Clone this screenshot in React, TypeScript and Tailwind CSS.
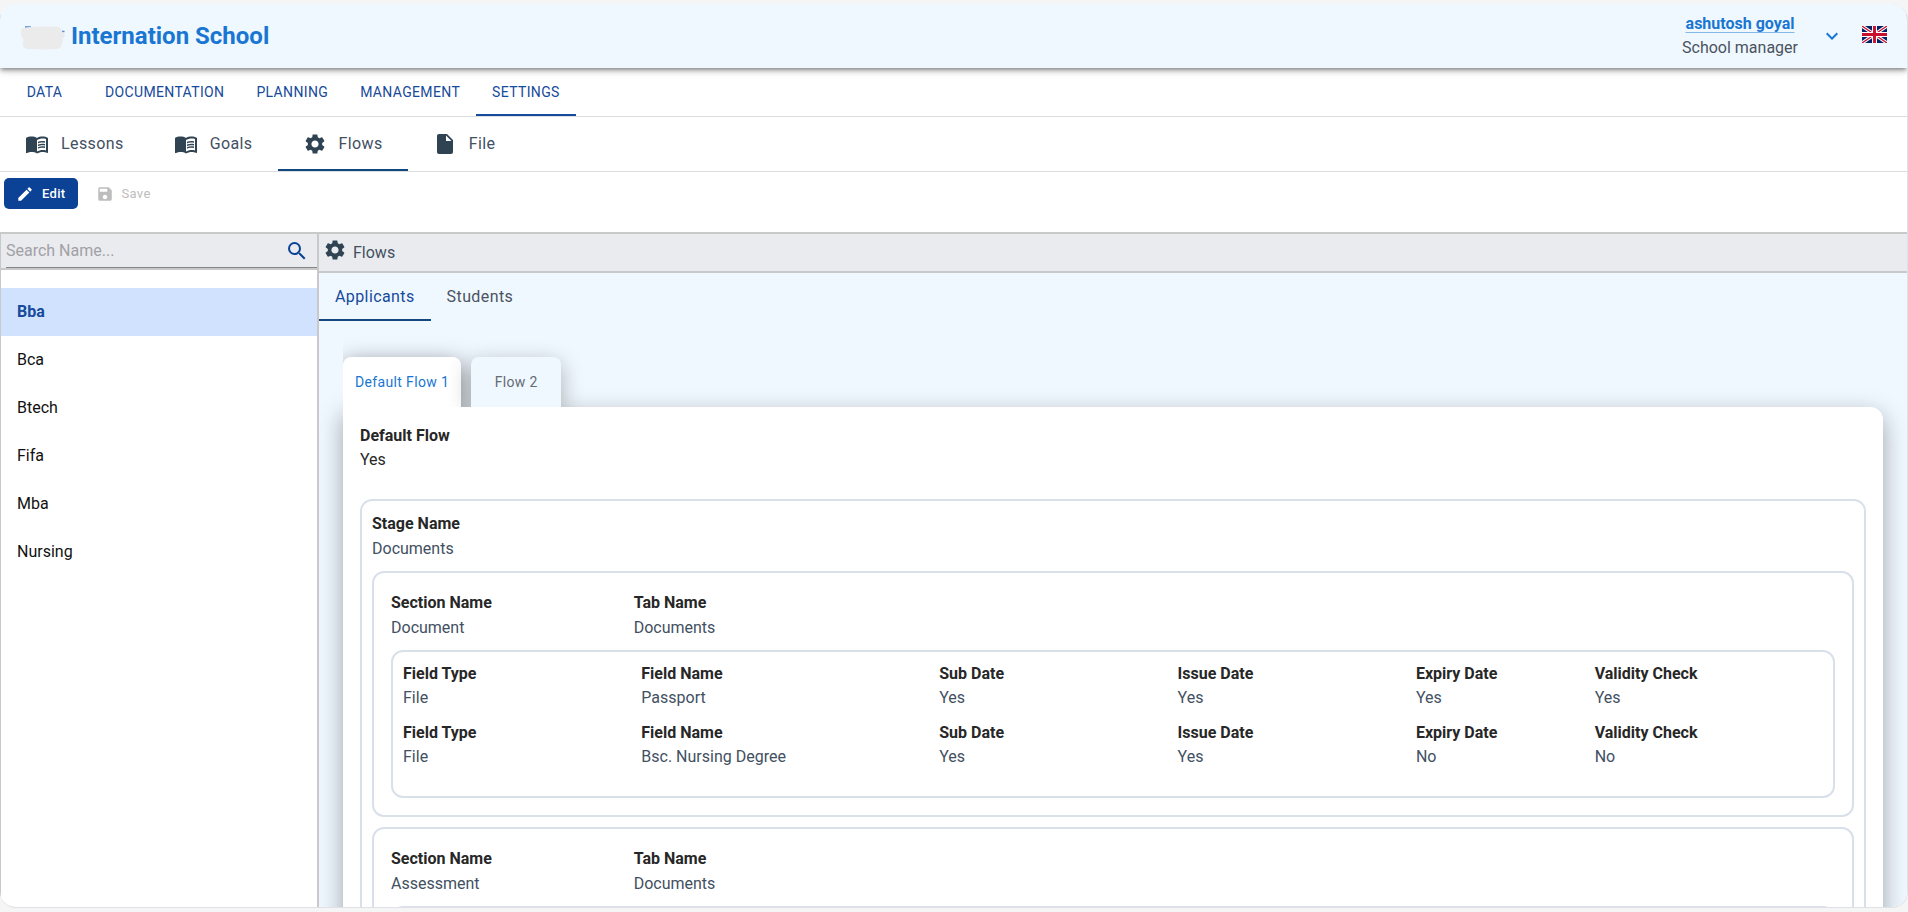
import React, { useState } from "react";
import {
  MdEdit,
  MdInsertDriveFile,
  MdKeyboardArrowDown,
  MdMenuBook,
  MdSave,
  MdSearch,
  MdSettings,
} from "react-icons/md";

const mainTabs = ["Data", "Documentation", "Planning", "Management", "Settings"];

const subTabs = [
  { name: "Lessons", icon: MdMenuBook },
  { name: "Goals", icon: MdMenuBook },
  { name: "Flows", icon: MdSettings },
  { name: "File", icon: MdInsertDriveFile },
];

const courses = ["Bba", "Bca", "Btech", "Fifa", "Mba", "Nursing"];

type FieldRow = {
  type: string;
  name: string;
  sub: string;
  issue: string;
  expiry: string;
  validity: string;
};

type Section = { name: string; tab: string; fields: FieldRow[] };

const sections: Section[] = [
  {
    name: "Document",
    tab: "Documents",
    fields: [
      { type: "File", name: "Passport", sub: "Yes", issue: "Yes", expiry: "Yes", validity: "Yes" },
      { type: "File", name: "Bsc. Nursing Degree", sub: "Yes", issue: "Yes", expiry: "No", validity: "No" },
    ],
  },
  { name: "Assessment", tab: "Documents", fields: [] },
];

function Info({ label, value }: { label: string; value: string }) {
  return (
    <div>
      <dt className="font-bold text-[#272727]">{label}</dt>
      <dd className="text-[#425062]">{value}</dd>
    </div>
  );
}

function Flag() {
  return (
    <svg viewBox="0 0 60 40" preserveAspectRatio="none" className="mb-[3px] h-[17px] w-[25px]" aria-label="English">
      <rect width="60" height="40" fill="#012169" />
      <path d="M0 0L60 40M60 0L0 40" stroke="#fff" strokeWidth="8" />
      <path d="M0 0L60 40M60 0L0 40" stroke="#c8102e" strokeWidth="3" />
      <path d="M30 0V40M0 20H60" stroke="#fff" strokeWidth="12" />
      <path d="M30 0V40M0 20H60" stroke="#c8102e" strokeWidth="7" />
    </svg>
  );
}

function Header() {
  return (
    <header className="relative z-10 flex h-16 shrink-0 items-center justify-between bg-[#f0f8ff] px-5 shadow-[0_2px_4px_-1px_rgba(0,0,0,0.4),0_4px_5px_rgba(0,0,0,0.14),0_1px_10px_rgba(0,0,0,0.12)]">
      <div className="flex items-center gap-[5px]">
        <svg viewBox="0 0 46 28" className="h-7 w-[46px]">
          <path d="M5 5H11M42 9.500H44.500" stroke="#4f8bd0" strokeWidth="1.500" fill="none" />
          <path
            d="M5 6C8 4 34 4.500 37 4.500C40 5 42 7 42.500 11C45 12 46 14 44 15C42 17 43 20 42 22C41 26 39 27 36 27C28 27.500 14 27.500 7 27C3 26 2 23 3.500 18C1 14 0 11 1 8C2 6 3 6 5 6Z"
            fill="#ebebeb"
          />
        </svg>
        <h1 className="text-2xl font-bold text-[#1976d2]">Internation School</h1>
      </div>
      <div className="flex items-center">
        <div className="text-center">
          <a href="#profile" className="block font-bold text-[#1976d2] underline decoration-[#1976d2]/50 underline-offset-3">
            ashutosh goyal
          </a>
          <p className="text-[#4a5361]">School manager</p>
        </div>
        <button type="button" aria-label="Account menu" className="mr-[18px] ml-[22px] text-[#1976d2]">
          <MdKeyboardArrowDown size={24} />
        </button>
        <Flag />
      </div>
    </header>
  );
}

function Sidebar() {
  const [selected, setSelected] = useState<string>("Bba");

  return (
    <aside className="w-[319px] shrink-0 border-r-2 border-l border-[#c9c9c9]">
      <div className="flex h-9 border-b-2 border-[#c9c9c9] bg-[#eaebef] pl-[5px]">
        <div className="flex flex-1 items-center border-b border-[#85868a] pr-2">
          <input
            type="text"
            aria-label="Search name"
            placeholder="Search Name..."
            className="min-w-0 flex-1 outline-none placeholder:text-[#a0a1a5]"
          />
          <button type="button" aria-label="Search" className="text-[#0b4296]">
            <MdSearch size={24} />
          </button>
        </div>
      </div>
      <ul className="pt-[18px]">
        {courses.map((course) => (
          <li key={course}>
            <button
              type="button"
              onClick={() => setSelected(course)}
              className={`h-12 w-full px-4 text-left ${
                selected === course ? "bg-[#d1e2fe] font-bold text-[#164a9b]" : "text-[#111111]"
              }`}
            >
              {course}
            </button>
          </li>
        ))}
      </ul>
    </aside>
  );
}

function SectionCard({ section }: { section: Section }) {
  return (
    <div className="rounded-xl border-2 border-[#d9e0ea] p-[17px]">
      <dl className="-mr-3 grid grid-cols-6 leading-[25px]">
        <Info label="Section Name" value={section.name} />
        <Info label="Tab Name" value={section.tab} />
      </dl>
      <div className="mt-[10px] flex flex-col gap-[11px] rounded-xl border-2 border-[#d9e0ea] pt-[10px] pb-[27px] pl-[10px]">
        {section.fields.map((field) => (
          <dl key={field.name} className="grid grid-cols-[4fr_5fr_4fr_4fr_3fr_4fr]">
            <Info label="Field Type" value={field.type} />
            <Info label="Field Name" value={field.name} />
            <Info label="Sub Date" value={field.sub} />
            <Info label="Issue Date" value={field.issue} />
            <Info label="Expiry Date" value={field.expiry} />
            <Info label="Validity Check" value={field.validity} />
          </dl>
        ))}
      </div>
    </div>
  );
}

function FlowPanel() {
  return (
    <div className="px-6">
      <div className="flex gap-[10px] overflow-hidden pt-9 text-sm tracking-wide">
        <button
          type="button"
          className="h-[50px] rounded-t-lg bg-white px-3 text-[#1976d2] shadow-[0_6px_22px_rgba(0,0,0,0.5)]"
        >
          Default Flow 1
        </button>
        <button
          type="button"
          className="h-[50px] min-w-[90px] rounded-t-lg bg-[#f0f8ff] px-3 text-[#646b73] shadow-[0_6px_22px_rgba(0,0,0,0.3)]"
        >
          Flow 2
        </button>
      </div>
      <div className="rounded-tr-xl border border-white bg-white p-4 shadow-[0_8px_24px_rgba(0,0,0,0.35)]">
        <dl>
          <dt className="font-bold text-[#272727]">Default Flow</dt>
          <dd className="text-[#272727]">Yes</dd>
        </dl>
        <div className="mt-[27px] rounded-xl border-2 border-[#d9e0ea] p-[10px]">
          <dl className="leading-[25px]">
            <Info label="Stage Name" value="Documents" />
          </dl>
          <div className="mt-[10px] flex flex-col gap-[10px]">
            {sections.map((section) => (
              <SectionCard key={section.name} section={section} />
            ))}
          </div>
        </div>
      </div>
    </div>
  );
}

function App() {
  const [mainTab, setMainTab] = useState<string>("Settings");
  const [subTab, setSubTab] = useState<string>("Flows");
  const [group, setGroup] = useState<string>("Applicants");

  return (
    <div className="flex h-screen flex-col bg-[#f5f5f5] pt-1 pb-1 font-['Roboto',sans-serif]">
      <div className="flex min-h-0 flex-1 flex-col overflow-hidden rounded-2xl border-r border-b border-[#e0e1e6] bg-white">
        <Header />

        <nav className="flex h-[49px] shrink-0 border-b border-[#dcdde0] text-sm tracking-wide text-[#164a9b]">
          {mainTabs.map((tab) => (
            <button
              key={tab}
              type="button"
              onClick={() => setMainTab(tab)}
              className={`min-w-[89px] px-4 uppercase ${
                mainTab === tab ? "shadow-[inset_0_-2px_0_#164a9b]" : ""
              }`}
            >
              {tab}
            </button>
          ))}
        </nav>

        <nav className="flex h-[55px] shrink-0 border-b border-[#dcdde0] tracking-wide text-[#425062]">
          {subTabs.map(({ name, icon: Icon }) => (
            <button
              key={name}
              type="button"
              onClick={() => setSubTab(name)}
              className={`flex items-center gap-3 px-[25px] ${
                subTab === name ? "shadow-[inset_0_-2px_0_#11487f]" : ""
              }`}
            >
              <Icon size={24} className="text-[#2f4353]" />
              {name}
            </button>
          ))}
        </nav>

        <div className="flex h-[60px] shrink-0 items-start gap-2 px-1 pt-[6px] text-[13px] tracking-wide">
          <button
            type="button"
            className="flex h-[31px] items-center gap-2 rounded-[5px] bg-[#0b4296] px-3 font-medium text-white"
          >
            <MdEdit size={18} />
            Edit
          </button>
          <button type="button" disabled className="flex h-[31px] items-center gap-2 px-[10px] text-[#bdbdbd]">
            <MdSave size={18} />
            Save
          </button>
        </div>

        <div className="flex min-h-0 flex-1 border-t-2 border-[#c9c9c9]">
          <Sidebar />
          <main className="min-w-0 flex-1 overflow-hidden bg-[#f0f8ff]">
            <div className="flex h-[39px] items-center gap-[6px] border-b-2 border-[#c9c9c9] bg-[#eaebef] px-1 text-[#425062]">
              <MdSettings size={24} className="mb-[6px] text-[#2f4353]" />
              <h2>Flows</h2>
            </div>
            <div className="flex h-12 tracking-wide">
              {["Applicants", "Students"].map((item) => (
                <button
                  key={item}
                  type="button"
                  onClick={() => setGroup(item)}
                  className={`px-4 ${
                    group === item ? "text-[#164a9b] shadow-[inset_0_-2px_0_#11487f]" : "text-[#4a5361]"
                  }`}
                >
                  {item}
                </button>
              ))}
            </div>
            <FlowPanel />
          </main>
        </div>
      </div>
    </div>
  );
}

export default App;
